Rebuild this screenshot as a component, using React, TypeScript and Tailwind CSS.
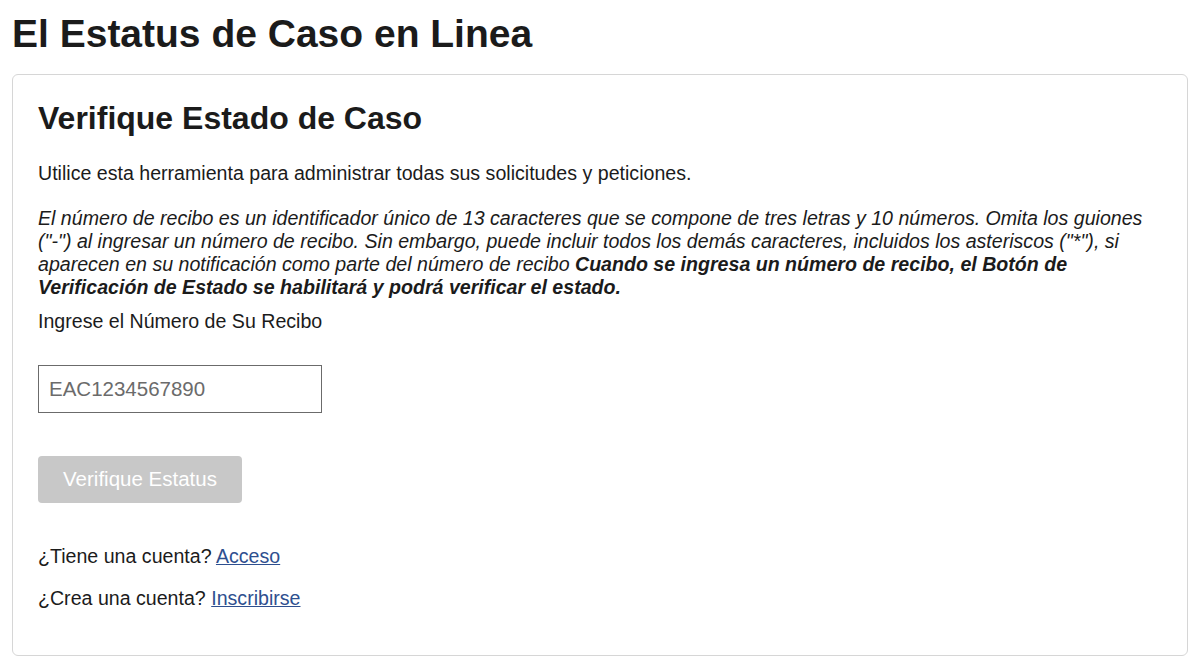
import { useState } from "react";

const font = { fontFamily: '"Liberation Sans", Arial, sans-serif' };

const App = () => {
  const [receipt, setReceipt] = useState("");

  return (
    <div className="min-h-screen bg-white text-[#1b1b1b] px-3 pt-[12px] pb-4" style={font}>
      <h1 className="text-[39px] font-bold leading-[44px] mb-[18px]">El Estatus de Caso en Linea</h1>

      <div className="border border-[#d6d6d6] rounded-md px-[25px] pt-[24px] pb-[45px]">
        <h2 className="text-[32px] font-bold leading-[38px] mb-[24px]">Verifique Estado de Caso</h2>

        <p className="text-[19.6px] leading-[24px] mb-[22px]">
          Utilice esta herramienta para administrar todas sus solicitudes y peticiones.
        </p>

        <p className="text-[19.6px] leading-[23px] italic mb-[10px]">
          El número de recibo es un identificador único de 13 caracteres que se compone de tres letras y 10 números.
          Omita los guiones ("-") al ingresar un número de recibo. Sin embargo, puede incluir todos los demás
          caracteres, incluidos los asteriscos ("*"), si aparecen en su notificación como parte del número de recibo{" "}
          <span className="font-bold leading-[23px]">
            Cuando se ingresa un número de recibo, el Botón de Verificación de Estado se habilitará y podrá verificar el
            estado.
          </span>
        </p>

        <label htmlFor="receipt" className="block text-[19.6px] leading-[24px] mb-[32px]">
          Ingrese el Número de Su Recibo
        </label>

        <input
          id="receipt"
          value={receipt}
          onChange={(e) => setReceipt(e.target.value)}
          placeholder="EAC1234567890"
          className="block w-[284px] h-[48px] border border-[#6b6b6b] px-[10px] text-[20.5px] text-[#1b1b1b] placeholder:text-[#6b6b6b] outline-none mb-[43px]"
        />

        <button
          disabled={!receipt}
          className="block w-[204px] h-[47px] rounded bg-[#c8c8c8] text-white text-[20.5px] mb-[41px]"
        >
          Verifique Estatus
        </button>

        <p className="text-[19.6px] leading-[24px] mb-[18px]">
          ¿Tiene una cuenta?{" "}
          <a href="#" className="text-[#2e4f8f] underline">
            Acceso
          </a>
        </p>
        <p className="text-[19.6px] leading-[24px]">
          ¿Crea una cuenta?{" "}
          <a href="#" className="text-[#2e4f8f] underline">
            Inscribirse
          </a>
        </p>
      </div>
    </div>
  );
};

export default App;
